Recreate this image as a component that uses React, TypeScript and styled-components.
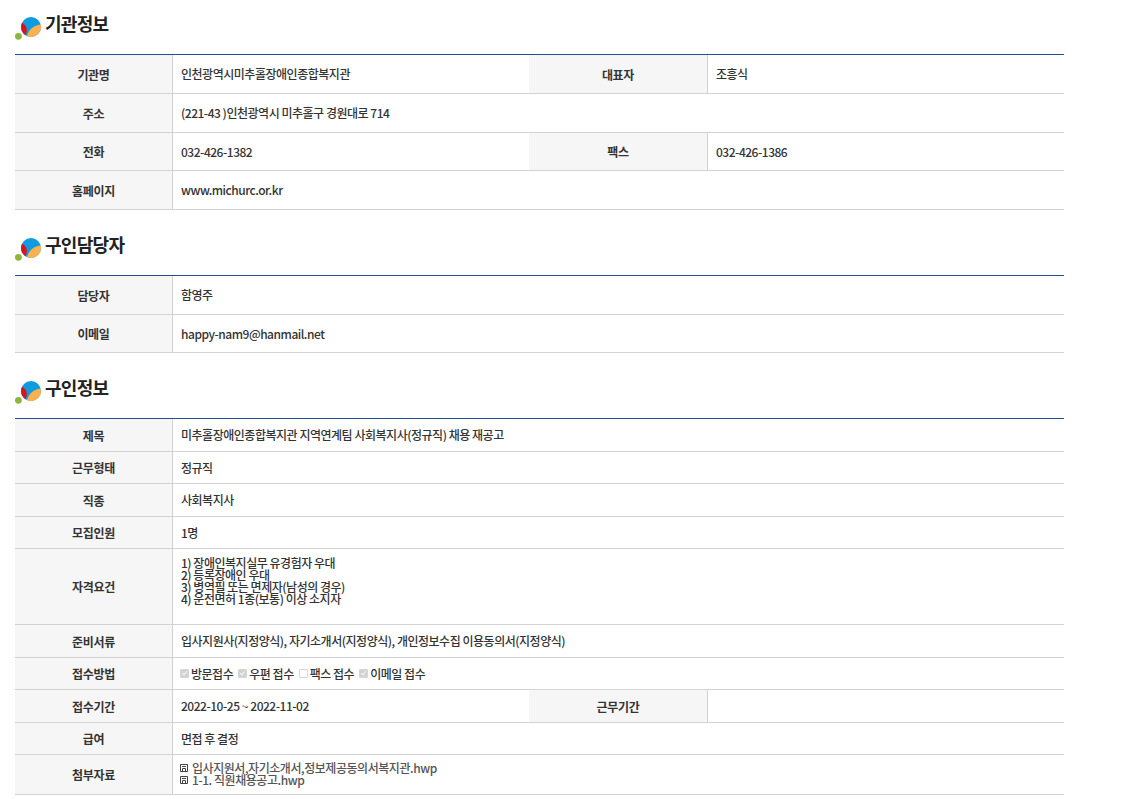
import React from "react";
import styled, { createGlobalStyle } from "styled-components";

const Global = createGlobalStyle`
  html, body { margin: 0; padding: 0; background: #fff; }
  body { font-family: "Noto Sans CJK KR", "Noto Sans", sans-serif; color: #333; }
`;
const Page = styled.div`
  width: 1049px;
  margin-left: 15px;
  padding-top: 8px;
  height: 791px;
  overflow: hidden;
`;
const Heading = styled.div<{ $h: number }>`
  display: flex;
  align-items: flex-start;
  gap: 4px;
  height: ${p => p.$h}px;
`;
const HeadingText = styled.h2`
  margin: 0;
  font-size: 18px;
  line-height: 30px;
  font-weight: 700;
  letter-spacing: -0.7px;
  color: #222;
`;
const Logo = styled.svg`
  width: 26px;
  height: 26px;
  margin-top: 6px;
  flex: none;
`;
const Table = styled.table<{ $mb: number }>`
  width: 1049px;
  table-layout: fixed;
  border-collapse: separate;
  border-spacing: 0;
  border-top: 1px solid #1d4f91;
  margin-bottom: ${p => p.$mb}px;
`;
const Row = styled.tr<{ $h: number }>`
  height: ${p => p.$h}px;
`;
const Th = styled.th`
  background: #f6f6f6;
  border-bottom: 1px solid #d2d2d2;
  border-right: 1px solid #d2d2d2;
  font-size: 12px;
  font-weight: 700;
  color: #333;
  letter-spacing: -0.3px;
  text-align: center;
  padding: 0;
`;
const Td = styled.td`
  border-bottom: 1px solid #d2d2d2;
  font-size: 12px;
  font-weight: 500;
  color: #333;
  letter-spacing: -0.48px;
  padding: 0 0 1px 8px;
`;
const Multi = styled.div`
  line-height: 12px;
  padding-bottom: 11px;
`;
const Checks = styled.div`
  display: flex;
  align-items: center;
  gap: 6px;
`;
const CheckItem = styled.label`
  display: flex;
  align-items: center;
`;
const Check = styled.input`
  appearance: none;
  flex: none;
  width: 9px;
  height: 9px;
  margin: 0 2px 0 -1px;
  box-sizing: border-box;
  border: 1px solid #d6d6d6;
  border-radius: 1px;
  background: #fff;
  position: relative;
  &:checked {
    background: #d2d2d2;
  }
  &:checked::after {
    content: "";
    position: absolute;
    left: 1.5px;
    top: 0;
    width: 2px;
    height: 4px;
    border: solid #f4f4f4;
    border-width: 0 1px 1px 0;
    transform: rotate(40deg);
  }
`;
const FileLine = styled.div`
  display: flex;
  align-items: center;
  gap: 4px;
  color: #555;
  font-size: 12px;
  line-height: 12px;
  letter-spacing: -0.45px;
`;
const FileIcon = styled.svg`
  width: 8px;
  height: 8px;
  margin-left: -1px;
  flex: none;
`;

function BrandMark() {
  return (
    <Logo viewBox="0 0 26 26">
      <circle cx="3.4" cy="22.3" r="3.4" fill="#8db53c" />
      <circle cx="16" cy="13" r="10" fill="#0e9be0" />
      <path d="M25.6 10.5 A10 10 0 0 1 12 22.2 C13.5 16 18 11.5 25.6 10.5Z" fill="#fbb14d" />
      <path d="M7 8.8 C10 10.5 12 13 11.8 16 C11.7 17.5 11.3 19 10.8 21.5 C7.5 19.5 6 16.5 6 13 C6 11.5 6.4 10 7 8.8Z" fill="#d9141e" />
    </Logo>
  );
}

function Title({ text, h }: { text: string; h: number }) {
  return (
    <Heading $h={h}>
      <BrandMark />
      <HeadingText>{text}</HeadingText>
    </Heading>
  );
}

function Cols() {
  return (
    <colgroup>
      <col style={{ width: 158 }} />
      <col style={{ width: 356 }} />
      <col style={{ width: 179 }} />
      <col />
    </colgroup>
  );
}

function Simple({ label, h, children }: { label: string; h: number; children: React.ReactNode }) {
  return (
    <Row $h={h}>
      <Th>{label}</Th>
      <Td colSpan={3}>{children}</Td>
    </Row>
  );
}

function Double({ a, b, c, d, h }: { a: string; b: string; c: string; d: string; h: number }) {
  return (
    <Row $h={h}>
      <Th>{a}</Th>
      <Td>{b}</Td>
      <Th>{c}</Th>
      <Td>{d}</Td>
    </Row>
  );
}

function AttachIcon() {
  return (
    <FileIcon viewBox="0 0 8 8">
      <path d="M.5.5h7v7h-7z M2 2.5h4 M2.5 7.5v-3h3v3" fill="none" stroke="#444" strokeWidth="1" />
    </FileIcon>
  );
}

const methods: [string, boolean][] = [
  ["방문접수", true],
  ["우편 접수", true],
  ["팩스 접수", false],
  ["이메일 접수", true],
];

export default function App() {
  return (
    <Page>
      <Global />
      <Title text="기관정보" h={46} />
      <Table $mb={19}>
        <Cols />
        <tbody>
          <Double h={39} a="기관명" b="인천광역시미추홀장애인종합복지관" c="대표자" d="조흥식" />
          <Simple label="주소" h={39}>(221-43 )인천광역시 미추홀구 경원대로 714</Simple>
          <Double h={38} a="전화" b="032-426-1382" c="팩스" d="032-426-1386" />
          <Simple label="홈페이지" h={39}>www.michurc.or.kr</Simple>
        </tbody>
      </Table>
      <Title text="구인담당자" h={46} />
      <Table $mb={19}>
        <Cols />
        <tbody>
          <Simple label="담당자" h={39}>함영주</Simple>
          <Simple label="이메일" h={38}>happy-nam9@hanmail.net</Simple>
        </tbody>
      </Table>
      <Title text="구인정보" h={46} />
      <Table $mb={0}>
        <Cols />
        <tbody>
          <Simple label="제목" h={33}>미추홀장애인종합복지관 지역연계팀 사회복지사(정규직) 채용 재공고</Simple>
          <Simple label="근무형태" h={32}>정규직</Simple>
          <Simple label="직종" h={33}>사회복지사</Simple>
          <Simple label="모집인원" h={32}>1명</Simple>
          <Simple label="자격요건" h={76}>
            <Multi>
              1) 장애인복지실무 유경험자 우대<br />
              2) 등록장애인 우대<br />
              3) 병역필 또는 면제자(남성의 경우)<br />
              4) 운전면허 1종(보통) 이상 소지자
            </Multi>
          </Simple>
          <Simple label="준비서류" h={33}>입사지원사(지정양식), 자기소개서(지정양식), 개인정보수집 이용동의서(지정양식)</Simple>
          <Simple label="접수방법" h={32}>
            <Checks>
              {methods.map(([t, on]) => (
                <CheckItem key={t}>
                  <Check type="checkbox" disabled defaultChecked={on} />
                  {t}
                </CheckItem>
              ))}
            </Checks>
          </Simple>
          <Double h={33} a="접수기간" b="2022-10-25 ~ 2022-11-02" c="근무기간" d="" />
          <Simple label="급여" h={32}>면접 후 결정</Simple>
          <Simple label="첨부자료" h={40}>
            <FileLine><AttachIcon />입사지원서,자기소개서,정보제공동의서복지관.hwp</FileLine>
            <FileLine><AttachIcon />1-1. 직원채용공고.hwp</FileLine>
          </Simple>
        </tbody>
      </Table>
    </Page>
  );
}
